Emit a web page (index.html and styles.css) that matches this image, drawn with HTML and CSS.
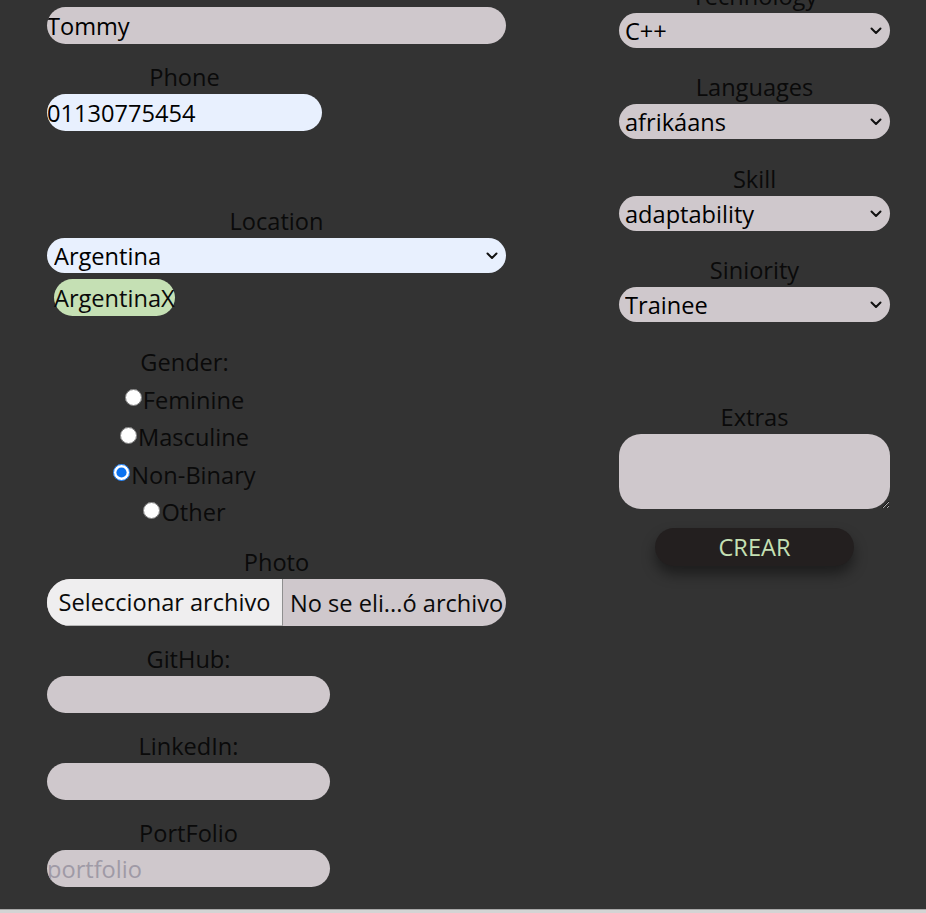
FILE: index.html
```html
<!DOCTYPE html>
<html lang="es">
<head>
<meta charset="utf-8">
<title>Form</title>
<link rel="stylesheet" href="styles.css">
</head>
<body>
<form class="form">
  <div class="col col-left">
    <div class="field w-wide">
      <label class="lbl" aria-label="Name"></label>
      <input class="inp" type="text" value="Tommy">
    </div>
    <div class="field w-phone">
      <label class="lbl">Phone</label>
      <input class="inp autofill" type="text" value="01130775454">
    </div>
    <div class="spacer"></div>
    <div class="field w-wide tight">
      <label class="lbl">Location</label>
      <div class="sel autofill">
        <select class="sel-native"><option>Argentina</option></select>
        <svg class="chev" width="12" height="8" viewBox="0 0 12 8"><path d="M1.5 1.5 L6 6 L10.5 1.5" fill="none" stroke="#111" stroke-width="2" stroke-linecap="round" stroke-linejoin="round"/></svg>
      </div>
    </div>
    <div class="chips"><span class="chip">ArgentinaX</span></div>
    <div class="gender">
      <div class="g-row g-title">Gender:</div>
      <label class="g-row"><input type="radio" name="g" class="radio">Feminine</label>
      <label class="g-row"><input type="radio" name="g" class="radio">Masculine</label>
      <label class="g-row"><input type="radio" name="g" class="radio" checked>Non-Binary</label>
      <label class="g-row"><input type="radio" name="g" class="radio">Other</label>
    </div>
    <div class="field w-wide">
      <label class="lbl">Photo</label>
      <div class="file">
        <span class="file-btn">Seleccionar archivo</span>
        <span class="file-name">No se eli...ó archivo</span>
      </div>
    </div>
    <div class="field w-short">
      <label class="lbl">GitHub:</label>
      <input class="inp" type="text">
    </div>
    <div class="field w-short">
      <label class="lbl">LinkedIn:</label>
      <input class="inp" type="text">
    </div>
    <div class="field w-short last">
      <label class="lbl">PortFolio</label>
      <input class="inp" type="text" placeholder="portfolio">
    </div>
  </div>

  <div class="col col-right">
    <div class="field w-right r">
      <label class="lbl">Technology</label>
      <div class="sel">
        <select class="sel-native"><option>C++</option></select>
        <svg class="chev" width="12" height="8" viewBox="0 0 12 8"><path d="M1.5 1.5 L6 6 L10.5 1.5" fill="none" stroke="#111" stroke-width="2" stroke-linecap="round" stroke-linejoin="round"/></svg>
      </div>
    </div>
    <div class="field w-right r">
      <label class="lbl">Languages</label>
      <div class="sel">
        <select class="sel-native"><option>afrikáans</option></select>
        <svg class="chev" width="12" height="8" viewBox="0 0 12 8"><path d="M1.5 1.5 L6 6 L10.5 1.5" fill="none" stroke="#111" stroke-width="2" stroke-linecap="round" stroke-linejoin="round"/></svg>
      </div>
    </div>
    <div class="field w-right r">
      <label class="lbl">Skill</label>
      <div class="sel">
        <select class="sel-native"><option>adaptability</option></select>
        <svg class="chev" width="12" height="8" viewBox="0 0 12 8"><path d="M1.5 1.5 L6 6 L10.5 1.5" fill="none" stroke="#111" stroke-width="2" stroke-linecap="round" stroke-linejoin="round"/></svg>
      </div>
    </div>
    <div class="field w-right r extras-gap">
      <label class="lbl">Siniority</label>
      <div class="sel">
        <select class="sel-native"><option>Trainee</option></select>
        <svg class="chev" width="12" height="8" viewBox="0 0 12 8"><path d="M1.5 1.5 L6 6 L10.5 1.5" fill="none" stroke="#111" stroke-width="2" stroke-linecap="round" stroke-linejoin="round"/></svg>
      </div>
    </div>
    <div class="field w-right last">
      <label class="lbl">Extras</label>
      <textarea class="ta"></textarea>
    </div>
    <button type="button" class="btn">CREAR</button>
  </div>
</form>
<div class="footer"></div>
</body>
</html>
```
FILE: styles.css
```css
* { box-sizing: border-box; }
html, body { margin: 0; padding: 0; }
body {
  background: #333333;
  font-family: "Open Sans", "Noto Sans", sans-serif;
  font-size: 23.6px;
  color: #0a0a0a;
  overflow: hidden;
  height: 913px;
}
.form {
  display: grid;
  grid-template-columns: 459px 271px;
  column-gap: 113px;
  padding-left: 47px;
  margin-top: -25px;
  align-items: start;
}
.col { display: flex; flex-direction: column; align-items: flex-start; }
.col-right { padding-top: 6px; }

.field { display: flex; flex-direction: column; margin-bottom: 18px; }
.field.r { margin-bottom: 24.3px; }
.field.tight { margin-bottom: 6px; }
.field.last { margin-bottom: 0; }
.field.extras-gap { margin-bottom: 80px; }
.w-wide { width: 459px; }
.w-phone { width: 275px; }
.w-short { width: 283px; }
.w-right { width: 271px; }

.lbl {
  display: block;
  text-align: center;
  height: 30px;
  line-height: 30px;
  margin-bottom: 2px;
  color: #0a0a0a;
  white-space: nowrap;
}
.inp {
  width: 100%;
  height: 37px;
  border: none;
  border-radius: 18.5px;
  background: #cfc8cc;
  font: inherit;
  color: #000;
  padding: 0;
  outline: none;
}
.inp::placeholder { color: #9f9aa6; }
.autofill { background: #e8f0fe !important; }

.spacer { height: 57px; }

.sel {
  position: relative;
  width: 100%;
  height: 35px;
  border-radius: 17.5px;
  background: #cfc8cc;
}
.sel-native {
  appearance: none;
  -webkit-appearance: none;
  width: 100%;
  height: 35px;
  border: none;
  background: transparent;
  font: inherit;
  color: #000;
  padding: 1px 30px 0 6px;
  outline: none;
}
.w-wide .sel-native { padding-left: 7px; }
.chev {
  position: absolute;
  right: 8px;
  top: 14px;
  pointer-events: none;
}

.chips { display: flex; padding-left: 7px; margin-bottom: 31px; }
.chip {
  display: inline-flex;
  align-items: center;
  height: 37px;
  padding: 0;
  border-radius: 18.5px;
  background: #c5e0b4;
  color: #0a0a0a;
}

.gender {
  width: 275px;
  display: flex;
  flex-direction: column;
  align-items: center;
  gap: 7.6px;
  margin-bottom: 20px;
}
.g-row {
  display: flex;
  align-items: center;
  height: 30px;
  line-height: 30px;
  color: #0a0a0a;
  white-space: nowrap;
}
.radio {
  width: 17px;
  height: 17px;
  margin: 0 1px 4px 0;
  accent-color: #0a72f0;
}

.file {
  display: flex;
  width: 100%;
  height: 47px;
  border-radius: 23.5px;
  overflow: hidden;
  background: #cfc8cc;
}
.file-btn {
  display: flex;
  align-items: center;
  justify-content: center;
  width: 236px;
  flex: none;
  background: #efeeef;
  border-right: 1px solid #8f8f8f;
  border-bottom: 1px solid #b5b5b5;
  color: #0a0a0a;
  white-space: nowrap;
}
.file-name {
  display: flex;
  align-items: center;
  padding-left: 7px;
  white-space: nowrap;
  color: #0a0a0a;
}

.ta {
  width: 271px;
  height: 75px;
  border: none;
  border-radius: 22px;
  background: #cfc8cc;
  font: inherit;
  padding: 4px 8px;
  outline: none;
  display: block;
}

.btn {
  align-self: center;
  margin-top: 19px;
  width: 199px;
  height: 38px;
  border: none;
  border-radius: 19px;
  background: #231f1f;
  color: #c5e0b4;
  font: inherit;
  box-shadow: 0 8px 14px rgba(0, 0, 0, 0.45);
  padding: 0;
}

.footer {
  margin-top: 22px;
  height: 10px;
  background: #d4d4d4;
  border-top: 1px solid #a8a8a8;
}
```
